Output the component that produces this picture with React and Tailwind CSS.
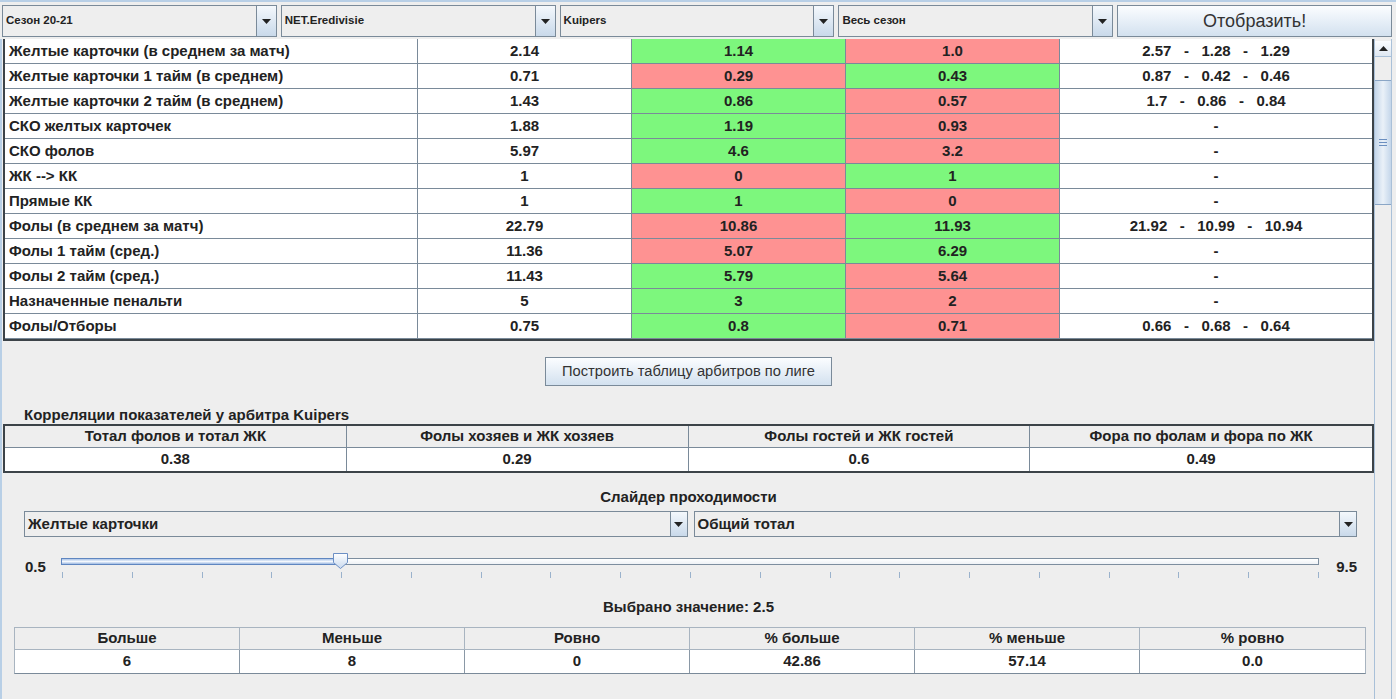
import React from "react";

const G = "bg-[#7df77d]";
const R = "bg-[#fe9292]";

const rows = [
  ["Желтые карточки (в среднем за матч)", "2.14", "1.14", "g", "1.0", "r", "2.57   -   1.28   -   1.29"],
  ["Желтые карточки 1 тайм (в среднем)", "0.71", "0.29", "r", "0.43", "g", "0.87   -   0.42   -   0.46"],
  ["Желтые карточки 2 тайм (в среднем)", "1.43", "0.86", "g", "0.57", "r", "1.7   -   0.86   -   0.84"],
  ["СКО желтых карточек", "1.88", "1.19", "g", "0.93", "r", "-"],
  ["СКО фолов", "5.97", "4.6", "g", "3.2", "r", "-"],
  ["ЖК --> КК", "1", "0", "r", "1", "g", "-"],
  ["Прямые КК", "1", "1", "g", "0", "r", "-"],
  ["Фолы (в среднем за матч)", "22.79", "10.86", "r", "11.93", "g", "21.92   -   10.99   -   10.94"],
  ["Фолы 1 тайм (сред.)", "11.36", "5.07", "r", "6.29", "g", "-"],
  ["Фолы 2 тайм (сред.)", "11.43", "5.79", "g", "5.64", "r", "-"],
  ["Назначенные пенальти", "5", "3", "g", "2", "r", "-"],
  ["Фолы/Отборы", "0.75", "0.8", "g", "0.71", "r", "0.66   -   0.68   -   0.64"],
];

function Arrow({ className = "" }) {
  return (
    <svg width="9" height="5" viewBox="0 0 9 5" className={className}>
      <path d="M0 0H9L4.5 5Z" fill="#222" />
    </svg>
  );
}

function Combo({ label, textClass = "text-[12px]", arrowW = "w-[20px]" }) {
  return (
    <div className="flex-1 flex h-full border border-[#7a8a99] bg-[#eeeeee] min-w-0">
      <div className={`flex-1 flex items-center pl-[3px] font-bold text-[#222] ${textClass} truncate`}>{label}</div>
      <div className={`${arrowW} h-full flex items-center justify-center border-l border-[#7a8a99] bg-gradient-to-b from-[#f4f8fc] to-[#c9d9ea]`}>
        <Arrow />
      </div>
    </div>
  );
}

export default function App() {
  return (
    <div className="w-[1396px] h-[699px] overflow-hidden bg-[#eeeeee] font-['Liberation_Sans',Arial,sans-serif] text-[#222] flex flex-col">
      {/* top bar */}
      <div className="h-[39px] shrink-0 border-t-2 border-[#b8cfe6] flex items-start pt-[3px] pl-[2px] pr-[4px] gap-[4px]">
        <div className="flex-1 flex gap-[4px] h-[32px]">
          <Combo label="Сезон 20-21" textClass="text-[11.5px]" />
          <Combo label="NET.Eredivisie" textClass="text-[11.5px]" />
          <Combo label="Kuipers" textClass="text-[11.5px]" />
          <Combo label="Весь сезон" textClass="text-[11.5px]" />
          <button className="flex-1 h-full border border-[#7a8a99] bg-gradient-to-b from-[#fbfdff] to-[#d3e1ef] text-[18px] text-[#333]">
            Отобразить!
          </button>
        </div>
      </div>

      <div className="flex-1 flex min-h-0">
        {/* main content */}
        <div className="flex-1 flex flex-col border-l-2 border-[#b8cfe6] pl-[1px]">
          {/* stats table */}
          <div className="border-l-2 border-b-2 border-r-2 border-[#3c4348] grid grid-cols-[413px_214px_214px_214px_1fr] text-[15px] font-bold">
            {rows.map((r, i) => (
              <React.Fragment key={i}>
                <div className="h-[25px] flex items-center pl-[4px] pt-[1px] border-r border-b border-[#7a8a99] bg-white">{r[0]}</div>
                <div className="h-[25px] flex items-center justify-center pt-[1px] border-r border-b border-[#7a8a99] bg-white">{r[1]}</div>
                <div className={`h-[25px] flex items-center justify-center pt-[1px] border-r border-b border-[#7a8a99] ${r[3] === "g" ? G : R}`}>{r[2]}</div>
                <div className={`h-[25px] flex items-center justify-center pt-[1px] border-r border-b border-[#7a8a99] ${r[5] === "g" ? G : R}`}>{r[4]}</div>
                <div className="h-[25px] flex items-center justify-center pt-[1px] border-b border-[#7a8a99] bg-white whitespace-pre">{r[6]}</div>
              </React.Fragment>
            ))}
          </div>

          {/* build button */}
          <div className="flex justify-center pt-[16px]">
            <button className="w-[287px] h-[29px] border border-[#7a8a99] bg-gradient-to-b from-[#fbfdff] to-[#d3e1ef] text-[14.7px] text-[#333]">
              Построить таблицу арбитров по лиге
            </button>
          </div>

          {/* correlations */}
          <div className="pl-[21px] pt-[20px] h-[38px] text-[15px] font-bold flex items-end pb-[2px] leading-none">
            Корреляции показателей у арбитра Kuipers
          </div>
          <div className="border-2 border-[#3c4348] grid grid-cols-4 text-[15px] font-bold">
            {["Тотал фолов и тотал ЖК", "Фолы хозяев и ЖК хозяев", "Фолы гостей и ЖК гостей", "Фора по фолам и фора по ЖК"].map((h, i) => (
              <div key={h} className={`h-[22px] flex items-center justify-center border-b border-[#7a8a99] bg-[#eeeeee] ${i < 3 ? "border-r" : ""}`}>{h}</div>
            ))}
            {["0.38", "0.29", "0.6", "0.49"].map((v, i) => (
              <div key={i} className={`h-[23px] flex items-center justify-center bg-white border-[#7a8a99] ${i < 3 ? "border-r" : ""}`}>{v}</div>
            ))}
          </div>

          {/* slider section */}
          <div className="text-center text-[15px] font-bold pt-[16px] h-[38px] leading-none">Слайдер проходимости</div>
          <div className="flex gap-[6px] pl-[21px] pr-[17px] h-[26px]">
            <Combo label="Желтые карточки" textClass="text-[15px]" arrowW="w-[17px]" />
            <Combo label="Общий тотал" textClass="text-[15px]" arrowW="w-[17px]" />
          </div>

          <div className="flex items-start pl-[22px] pr-[17px] pt-[16px] h-[62px]">
            <div className="w-[36px] pt-[3px] text-[15px] font-bold">0.5</div>
            <div className="w-[1258px] flex flex-col">
              <div className="relative h-[16px]">
                <div className="absolute left-0 top-[5px] w-[280px] h-[7px] border border-[#5f86c0] bg-gradient-to-b from-[#a9c2e6] via-[#f4f8fd] to-[#9db9e2]" />
                <div className="absolute left-[279px] right-0 top-[5px] h-[7px] border border-[#7d8e9f] bg-gradient-to-b from-[#ffffff] to-[#eef2f6]" />
                <svg className="absolute left-[272px] top-0" width="15" height="16" viewBox="0 0 15 16">
                  <defs>
                    <linearGradient id="th" x1="0" y1="0" x2="0" y2="1">
                      <stop offset="0" stopColor="#ffffff" />
                      <stop offset="1" stopColor="#c9d9ee" />
                    </linearGradient>
                  </defs>
                  <path d="M0.5 0.5H14.5V9.5L7.5 15.5L0.5 9.5Z" fill="url(#th)" stroke="#6c8fc4" />
                </svg>
              </div>
              <div className="relative h-[8px] mt-[3px]">
                {Array.from({ length: 19 }).map((_, i) => (
                  <div key={i} className="absolute top-0 w-px h-[6px] bg-[#9ab2cc]" style={{ left: `${1 + i * 69.78}px` }} />
                ))}
              </div>
            </div>
            <div className="flex-1 pt-[3px] text-right text-[15px] font-bold">9.5</div>
          </div>

          <div className="text-center text-[15px] font-bold h-[28px] leading-none pt-[0px]">Выбрано значение: 2.5</div>

          <div className="pl-[11px] pr-[8px]">
            <div className="border border-[#a8b4c0] border-b-[#7a8a99] grid grid-cols-6 text-[15px] font-bold">
              {["Больше", "Меньше", "Ровно", "% больше", "% меньше", "% ровно"].map((h, i) => (
                <div key={h} className={`h-[22px] flex items-center justify-center bg-[#eeeeee] border-b border-[#a8b4c0] ${i < 5 ? "border-r" : ""}`}>{h}</div>
              ))}
              {["6", "8", "0", "42.86", "57.14", "0.0"].map((v, i) => (
                <div key={i} className={`h-[23px] flex items-center justify-center bg-white border-[#8a98a6] ${i < 5 ? "border-r" : ""}`}>{v}</div>
              ))}
            </div>
          </div>
        </div>

        {/* scrollbar */}
        <div className="w-[18px] shrink-0 flex flex-col border-l border-r border-[#a9c0d8] bg-[#eeeeee]">
          <div className="h-[2px]" />
          <div className="h-[16px] flex items-center justify-center bg-gradient-to-b from-[#fbfdff] to-[#dfe8f2] border-b border-[#a9c0d8]">
            <svg width="9" height="5" viewBox="0 0 9 5"><path d="M0 5H9L4.5 0Z" fill="#222" /></svg>
          </div>
          <div className="h-[23px] bg-[#eeeeee]" />
          <div className="h-[125px] bg-gradient-to-r from-[#c4d6ea] via-[#eaf1f8] to-[#c4d6ea] border-y border-[#8aa6c6] flex items-center justify-center">
            <div className="flex flex-col gap-[2px]">
              <div className="w-[8px] h-px bg-[#6b8fc0]" />
              <div className="w-[8px] h-px bg-[#6b8fc0]" />
              <div className="w-[8px] h-px bg-[#6b8fc0]" />
            </div>
          </div>
          <div className="flex-1" />
        </div>
        <div className="w-[4px] shrink-0" />
      </div>
    </div>
  );
}
